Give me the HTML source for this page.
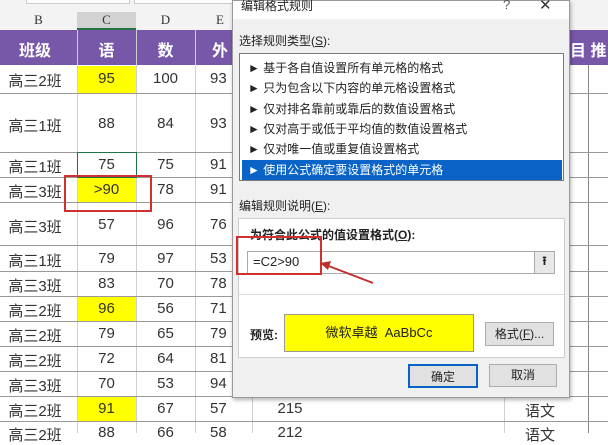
<!DOCTYPE html>
<html><head><meta charset="utf-8"><style>
*{margin:0;padding:0;box-sizing:border-box}
body{width:608px;height:433px;overflow:hidden;background:#fff;position:relative;font-family:"Liberation Sans","Noto Sans CJK SC",sans-serif;color:#222}
.a{position:absolute}
.c{position:absolute;text-align:center;font-size:15px;color:#333}
.hl{position:absolute;height:1px;background:#999;left:0;width:608px}
.vl{position:absolute;width:1px;background:#cfcfd8}
.it{position:absolute;left:8px;font-size:12px;color:#222;white-space:nowrap}
.btn{position:absolute;background:#e1e1e1;border:1px solid #adadad;font-size:12px;text-align:center}
</style></head><body>
<!-- top header area -->
<div class="a" style="left:0;top:0;width:608px;height:30px;background:#f3f3f3"></div>
<div class="a" style="left:26px;top:0;width:104px;height:4px;background:#fff;border:1px solid #ccc;border-top:none"></div>
<div class="a" style="left:134px;top:0;width:100px;height:4px;background:#fff;border:1px solid #ccc;border-top:none"></div>
<div class="a" style="left:77px;top:12px;width:59px;height:18px;background:#d2d2d2;border-bottom:2px solid #217346"></div>
<div class="c" style="left:0;top:12px;width:77px;font-size:13px;font-family:'Liberation Serif'">B</div>
<div class="c" style="left:77px;top:12px;width:59px;font-size:13px;font-family:'Liberation Serif'">C</div>
<div class="c" style="left:136px;top:12px;width:59px;font-size:13px;font-family:'Liberation Serif'">D</div>
<div class="c" style="left:195px;top:12px;width:50px;font-size:13px;font-family:'Liberation Serif'">E</div>
<!-- purple header -->
<div class="a" style="left:0;top:30px;width:608px;height:35px;background:#7757a8"></div>
<div class="c" style="left:0;top:37px;width:70px;color:#fff;font-weight:bold;font-size:16px">班级</div>
<div class="c" style="left:77px;top:37px;width:59px;color:#fff;font-weight:bold;font-size:16px">语</div>
<div class="c" style="left:136px;top:37px;width:59px;color:#fff;font-weight:bold;font-size:16px">数</div>
<div class="c" style="left:205px;top:37px;width:30px;color:#fff;font-weight:bold;font-size:16px">外</div>
<div class="a" style="left:570px;top:37px;color:#fff;font-weight:bold;font-size:16px">目 推</div>
<!-- yellow cells -->
<div class="a" style="left:77px;top:66px;width:59px;height:27px;background:#ffff00"></div>
<div class="a" style="left:77px;top:178px;width:59px;height:24px;background:#ffff00"></div>
<div class="a" style="left:77px;top:297px;width:59px;height:24px;background:#ffff00"></div>
<div class="a" style="left:77px;top:397px;width:59px;height:24px;background:#ffff00"></div>
<!-- grid -->
<div class="vl" style="left:77px;top:30px;height:403px"></div>
<div class="vl" style="left:136px;top:30px;height:403px"></div>
<div class="vl" style="left:195px;top:30px;height:403px"></div>
<div class="vl" style="left:252px;top:395px;height:38px"></div>
<div class="vl" style="left:504px;top:395px;height:38px"></div>
<div class="vl" style="left:588px;top:65px;height:368px;background:#888"></div>
<div class="hl" style="top:93px"></div><div class="hl" style="top:152px"></div>
<div class="hl" style="top:177px"></div><div class="hl" style="top:202px"></div>
<div class="hl" style="top:245px"></div><div class="hl" style="top:271px"></div>
<div class="hl" style="top:296px"></div><div class="hl" style="top:321px"></div>
<div class="hl" style="top:346px"></div><div class="hl" style="top:371px"></div>
<div class="hl" style="top:396px"></div><div class="hl" style="top:421px"></div>
<div class="a" style="left:77px;top:152px;width:60px;height:26px;border:1.5px solid #217346"></div>
<div id="rows"></div>
<!-- row text -->
<div class="c" style="left:0;top:70px;width:70px">高三2班</div><div class="c" style="left:77px;top:70px;width:59px">95</div><div class="c" style="left:136px;top:70px;width:59px">100</div><div class="c" style="left:210px;top:70px">93</div>
<div class="c" style="left:0;top:115px;width:70px">高三1班</div><div class="c" style="left:77px;top:115px;width:59px">88</div><div class="c" style="left:136px;top:115px;width:59px">84</div><div class="c" style="left:210px;top:115px">93</div>
<div class="c" style="left:0;top:156px;width:70px">高三1班</div><div class="c" style="left:77px;top:156px;width:59px">75</div><div class="c" style="left:136px;top:156px;width:59px">75</div><div class="c" style="left:210px;top:156px">91</div>
<div class="c" style="left:0;top:181px;width:70px">高三3班</div><div class="c" style="left:77px;top:181px;width:59px">&gt;90</div><div class="c" style="left:136px;top:181px;width:59px">78</div><div class="c" style="left:210px;top:181px">91</div>
<div class="c" style="left:0;top:216px;width:70px">高三3班</div><div class="c" style="left:77px;top:216px;width:59px">57</div><div class="c" style="left:136px;top:216px;width:59px">96</div><div class="c" style="left:210px;top:216px">76</div>
<div class="c" style="left:0;top:250px;width:70px">高三1班</div><div class="c" style="left:77px;top:250px;width:59px">79</div><div class="c" style="left:136px;top:250px;width:59px">97</div><div class="c" style="left:210px;top:250px">53</div>
<div class="c" style="left:0;top:275px;width:70px">高三3班</div><div class="c" style="left:77px;top:275px;width:59px">83</div><div class="c" style="left:136px;top:275px;width:59px">70</div><div class="c" style="left:210px;top:275px">78</div>
<div class="c" style="left:0;top:300px;width:70px">高三2班</div><div class="c" style="left:77px;top:300px;width:59px">96</div><div class="c" style="left:136px;top:300px;width:59px">56</div><div class="c" style="left:210px;top:300px">71</div>
<div class="c" style="left:0;top:325px;width:70px">高三2班</div><div class="c" style="left:77px;top:325px;width:59px">79</div><div class="c" style="left:136px;top:325px;width:59px">65</div><div class="c" style="left:210px;top:325px">79</div>
<div class="c" style="left:0;top:350px;width:70px">高三2班</div><div class="c" style="left:77px;top:350px;width:59px">72</div><div class="c" style="left:136px;top:350px;width:59px">64</div><div class="c" style="left:210px;top:350px">81</div>
<div class="c" style="left:0;top:375px;width:70px">高三3班</div><div class="c" style="left:77px;top:375px;width:59px">70</div><div class="c" style="left:136px;top:375px;width:59px">53</div><div class="c" style="left:210px;top:375px">94</div>
<div class="c" style="left:0;top:400px;width:70px">高三2班</div><div class="c" style="left:77px;top:400px;width:59px">91</div><div class="c" style="left:136px;top:400px;width:59px">67</div><div class="c" style="left:210px;top:400px">57</div>
<div class="c" style="left:0;top:424px;width:70px">高三2班</div><div class="c" style="left:77px;top:424px;width:59px">88</div><div class="c" style="left:136px;top:424px;width:59px">66</div><div class="c" style="left:210px;top:424px">58</div>
<div class="c" style="left:270px;top:400px;width:40px">215</div><div class="c" style="left:270px;top:424px;width:40px">212</div>
<div class="c" style="left:525px;top:400px">语文</div><div class="c" style="left:525px;top:424px">语文</div>
<div class="a" style="left:64px;top:175px;width:88px;height:37px;border:2px solid #d03030"></div>
<!-- dialog -->
<div class="a" style="left:232px;top:0;width:338px;height:398px;background:#f0f0f0;border:1px solid #999;box-shadow:1px 2px 4px rgba(0,0,0,.3)">
 <div class="a" style="left:0;top:0;width:336px;height:18px;background:#fff"></div>
 <div class="a" style="left:8px;top:-4px;font-size:12px">编辑格式规则</div>
 <div class="a" style="left:270px;top:-4px;font-size:13px;color:#555">?</div>
 <div class="a" style="left:306px;top:-5px;font-size:15px;color:#333">✕</div>
 <div class="a" style="left:6px;top:31px;font-size:12px">选择规则类型(<u>S</u>):</div>
 <div class="a" style="left:6px;top:52px;width:325px;height:128px;background:#fff;border:1px solid #7a7a7a">
  <div class="it" style="top:5px">► 基于各自值设置所有单元格的格式</div>
  <div class="it" style="top:25px">► 只为包含以下内容的单元格设置格式</div>
  <div class="it" style="top:46px">► 仅对排名靠前或靠后的数值设置格式</div>
  <div class="it" style="top:66px">► 仅对高于或低于平均值的数值设置格式</div>
  <div class="it" style="top:86px">► 仅对唯一值或重复值设置格式</div>
  <div class="a" style="left:2px;top:106px;width:320px;height:20px;background:#0a64c8"></div>
  <div class="it" style="top:107px;color:#fff">► 使用公式确定要设置格式的单元格</div>
 </div>
 <div class="a" style="left:6px;top:196px;font-size:12px">编辑规则说明(<u>E</u>):</div>
 <div class="a" style="left:5px;top:217px;width:327px;height:140px;background:#fff;border:1px solid #ccc">
  <div class="a" style="left:11px;top:7px;font-size:12px;font-weight:bold">为符合此公式的值设置格式(<u>O</u>):</div>
  <div class="a" style="left:8px;top:32px;width:308px;height:23px;border:1px solid #aaa;background:#fff"></div>
  <div class="a" style="left:14px;top:35px;font-size:13px">=C2&gt;90</div>
  <div class="a" style="left:295px;top:33px;width:20px;height:21px;background:#e8e8e8;border-left:1px solid #aaa;text-align:center;font-size:12px;font-weight:bold">⭱</div>
  <div class="a" style="left:0;top:75px;width:325px;height:1px;background:#ddd"></div>
  <div class="a" style="left:11px;top:107px;font-size:12px;font-weight:bold">预览:</div>
  <div class="a" style="left:45px;top:95px;width:190px;height:38px;background:#ffff00;border:1px solid #999;text-align:center;line-height:36px;font-size:13px">微软卓越&nbsp; AaBbCc</div>
  <div class="btn" style="left:246px;top:103px;width:69px;height:24px;line-height:22px">格式(<u>F</u>)...</div>
 </div>
 <div class="btn" style="left:175px;top:363px;width:70px;height:24px;line-height:22px;border:2px solid #0a64c8">确定</div>
 <div class="btn" style="left:256px;top:363px;width:68px;height:23px;line-height:21px">取消</div>
</div>
<div class="a" style="left:236px;top:236px;width:86px;height:39px;border:2px solid #d03030"></div>
<svg class="a" style="left:0;top:0" width="608" height="433"><line x1="373" y1="283" x2="326" y2="265" stroke="#c03030" stroke-width="2"/><polygon points="320,263 331,261 328,270" fill="#c03030"/></svg>
</body></html>
